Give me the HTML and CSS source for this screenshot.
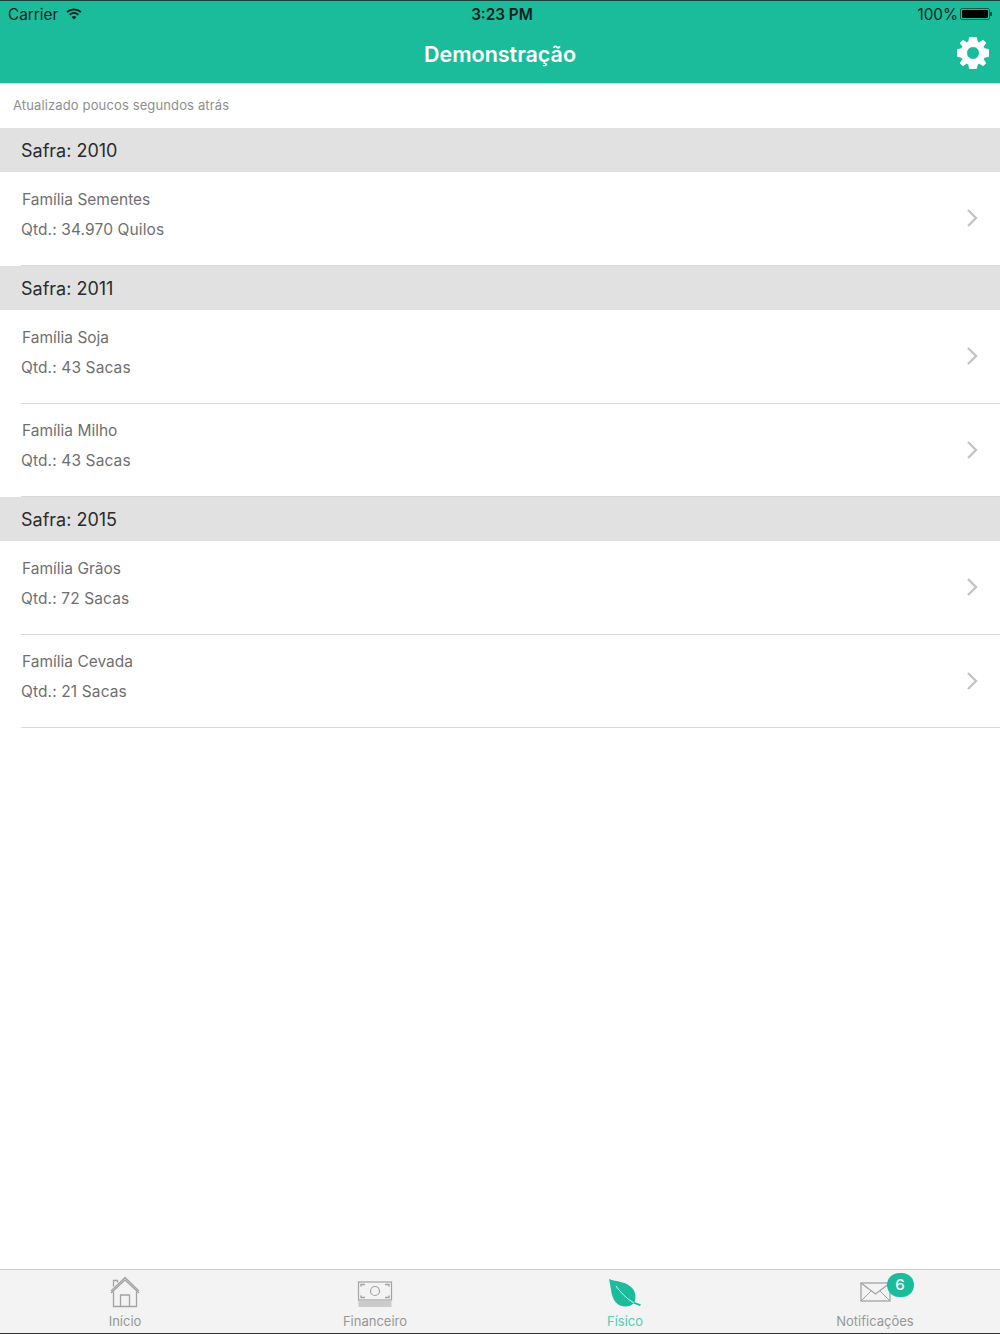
FILE: index.html
```html
<!DOCTYPE html>
<html lang="pt-BR">
<head>
  <meta charset="UTF-8" />
  <title>Demonstração</title>
  <link rel="stylesheet" href="styles.css">
</head>
<body>
  <div class="app">
    <header class="topbar">
      <div class="status">
        <div class="status-left">
          <span>Carrier</span>
          <svg class="wifi" viewBox="0 0 16 12" width="16" height="12">
            <path d="M1 4.2C5 .6 11 .6 15 4.2" fill="none" stroke="#0d1f1c" stroke-width="1.8"/>
            <path d="M3.6 6.8C6.2 4.6 9.8 4.6 12.4 6.8" fill="none" stroke="#0d1f1c" stroke-width="1.8"/>
            <path d="M5.6 8.9L8 11.5L10.4 8.9C9 7.8 7 7.8 5.6 8.9Z" fill="#0d1f1c"/>
          </svg>
        </div>
        <div class="status-time">3:23 PM</div>
        <div class="status-right">
          <span>100%</span>
          <div class="battery"><div class="battery-fill"></div></div>
          <div class="battery-tip"></div>
        </div>
      </div>
      <div class="navbar">
        <h1>Demonstração</h1>
        <svg class="gear" viewBox="0 0 32 32" width="32" height="32">
          <path fill="#fff" fill-rule="evenodd" d="M12.600 0.500L19.400 0.500L20.300 4.800L22.400 5.700L26.100 3.300L28.700 5.900L26.300 9.600L27.200 11.700L31.500 12.600L31.500 19.400L27.200 20.300L26.300 22.400L28.700 26.100L26.100 28.700L22.400 26.300L20.300 27.200L19.400 31.500L12.600 31.500L11.700 27.200L9.600 26.300L5.900 28.700L3.300 26.100L5.700 22.400L4.800 20.300L0.500 19.400L0.500 12.600L4.800 11.700L5.700 9.600L3.300 5.900L5.900 3.300L9.600 5.700L11.700 4.800ZM16 9.500A6.500 6.500 0 1 0 16 22.500A6.500 6.500 0 0 0 16 9.500Z" stroke="#fff" stroke-width="1" stroke-linejoin="round"/>
        </svg>
      </div>
    </header>

    <div class="updated">Atualizado poucos segundos atrás</div>

    <main class="list">
      <div class="section">Safra: 2010</div>
      <div class="row">
        <div class="row-text">
          <p class="family">Família Sementes</p>
          <p class="qty">Qtd.: 34.970 Quilos</p>
        </div>
        <svg class="chevron" viewBox="0 0 12 20" width="12" height="20"><path d="M2 2l8 8-8 8" fill="none" stroke="#c4c4c6" stroke-width="2.4"/></svg>
      </div>

      <div class="section">Safra: 2011</div>
      <div class="row">
        <div class="row-text">
          <p class="family">Família Soja</p>
          <p class="qty">Qtd.: 43 Sacas</p>
        </div>
        <svg class="chevron" viewBox="0 0 12 20" width="12" height="20"><path d="M2 2l8 8-8 8" fill="none" stroke="#c4c4c6" stroke-width="2.4"/></svg>
      </div>
      <div class="row">
        <div class="row-text">
          <p class="family">Família Milho</p>
          <p class="qty">Qtd.: 43 Sacas</p>
        </div>
        <svg class="chevron" viewBox="0 0 12 20" width="12" height="20"><path d="M2 2l8 8-8 8" fill="none" stroke="#c4c4c6" stroke-width="2.4"/></svg>
      </div>

      <div class="section">Safra: 2015</div>
      <div class="row">
        <div class="row-text">
          <p class="family">Família Grãos</p>
          <p class="qty">Qtd.: 72 Sacas</p>
        </div>
        <svg class="chevron" viewBox="0 0 12 20" width="12" height="20"><path d="M2 2l8 8-8 8" fill="none" stroke="#c4c4c6" stroke-width="2.4"/></svg>
      </div>
      <div class="row">
        <div class="row-text">
          <p class="family">Família Cevada</p>
          <p class="qty">Qtd.: 21 Sacas</p>
        </div>
        <svg class="chevron" viewBox="0 0 12 20" width="12" height="20"><path d="M2 2l8 8-8 8" fill="none" stroke="#c4c4c6" stroke-width="2.4"/></svg>
      </div>
    </main>

    <nav class="tabs">
      <a class="tab">
        <svg viewBox="0 0 30 32" width="30" height="32">
          <g fill="none" stroke="#a3a3a3" stroke-width="1.3">
            <path d="M1 15L15 1.500L29 15"/>
            <path d="M3.500 10.500V4.500H7.500V6.500"/>
            <path d="M1 17L15 4L29 17"/>
            <path d="M3.500 15.500V30.500H26.500V15.500"/>
            <path d="M10.500 30.500V19H19.500V30.500"/>
          </g>
        </svg>
        <span>Início</span>
      </a>
      <a class="tab">
        <svg class="money" viewBox="0 0 36 26" width="36" height="26">
          <g fill="none" stroke="#a3a3a3" stroke-width="1.200">
            <rect x="1.500" y="1" width="33" height="18"/>
            <circle cx="18" cy="10" r="4.500"/>
            <path d="M4 5.500V3.500H8M28 3.500H32V5.500M4 14.500V16.500H8M28 16.500H32V14.500" stroke-width="1.400"/>
            <path d="M1.500 21H34.500M1.500 23H34.500M1.500 25H34.500" stroke-width="1"/>
          </g>
        </svg>
        <span>Financeiro</span>
      </a>
      <a class="tab active">
        <svg viewBox="0 0 34 30" width="34" height="30">
          <path fill="#1abc9c" d="M1 1C8 4 19 3 25 11C28 15 28 20 26.500 24L33 26.500L32 28L25.500 25.500C21 30 12 29.500 7.500 24C3 18.500 3 9 1 1Z"/>
          <path d="M8 8C13 15 19 21 26 25" fill="none" stroke="#e4f6f2" stroke-width="1"/>
        </svg>
        <span>Físico</span>
      </a>
      <a class="tab">
        <div class="icon-wrap">
          <svg viewBox="0 0 31 20" width="31" height="20">
            <g fill="none" stroke="#a3a3a3" stroke-width="1.300">
              <rect x="1" y="1" width="29" height="18"/>
              <path d="M1 1L15.500 12L30 1"/>
              <path d="M1 19L11 9M30 19L20 9" stroke-width="1"/>
            </g>
          </svg>
          <div class="badge">6</div>
        </div>
        <span>Notificações</span>
      </a>
    </nav>
  </div>
</body>
</html>
```

FILE: styles.css
```css
:root {
  --primary: #1abc9c;
  --section: #e1e1e1;
  --line: #d9d9d9;
  --text-gray: #6f6f6f;
}

* {
  box-sizing: border-box;
  margin: 0;
  padding: 0;
}

html, body {
  height: 100%;
  background: #fff;
  font-family: 'Inter', 'Liberation Sans', sans-serif;
}

.app {
  height: 1334px;
  display: flex;
  flex-direction: column;
  overflow: hidden;
  border-bottom: 1px solid #333;
}

/* topo */
.topbar {
  height: 84px;
  background: var(--primary);
  border-top: 1px solid #12453b;
  border-bottom: 1px solid #d5d5d5;
  flex-shrink: 0;
}

.status {
  height: 26px;
  padding: 0 8px;
  display: flex;
  align-items: center;
  justify-content: space-between;
  position: relative;
  font-size: 15.3px;
  color: #0d1f1c;
}

.status-left {
  display: flex;
  align-items: center;
  gap: 8px;
}

.status-time {
  position: absolute;
  left: 0;
  right: -4px;
  text-align: center;
  font-weight: 600;
}

.status-right {
  display: flex;
  align-items: center;
}

.battery {
  width: 30px;
  height: 12px;
  margin-left: 2px;
  padding: 1px;
  border: 1px solid #0f5c4c;
  border-radius: 2px;
}

.battery-fill {
  height: 100%;
  background: #000;
  border-radius: 1px;
}

.battery-tip {
  width: 2px;
  height: 4px;
  background: #0f4f42;
}

.navbar {
  height: 56px;
  display: flex;
  align-items: center;
  justify-content: center;
  position: relative;
}

.navbar h1 {
  font-size: 21.500px;
  font-weight: 600;
  color: #fff;
  margin-top: -2px;
}

.gear {
  position: absolute;
  right: 11px;
  top: 10px;
}

.updated {
  height: 44px;
  padding-left: 13px;
  line-height: 43px;
  font-size: 13px;
  letter-spacing: .13px;
  color: #8e8e8e;
  flex-shrink: 0;
}

/* lista */
.list {
  flex: 1;
}

.section {
  height: 44px;
  padding-left: 21px;
  line-height: 46px;
  font-size: 18px;
  color: #2b2b2b;
  background: var(--section);
}

.row {
  height: 93px;
  margin-left: 21px;
  padding-right: 22px;
  display: flex;
  align-items: center;
  justify-content: space-between;
  border-bottom: 1px solid var(--line);
}

.section + .row {
  height: 94px;
}

.row-text {
  color: var(--text-gray);
  font-size: 15.500px;
  margin-top: -9px;
}

.section + .row .row-text {
  margin-top: -7px;
}

.section + .row .chevron {
  margin-top: -1px;
}

.family {
  margin-left: 1px;
  line-height: 30px;
}

.qty {
  line-height: 30px;
  letter-spacing: .12px;
}

/* abas */
.tabs {
  height: 64px;
  flex-shrink: 0;
  display: grid;
  grid-template-columns: repeat(4, 1fr);
  background: #f3f3f3;
  border-top: 1px solid #cfcfcf;
}

.tab {
  position: relative;
  display: flex;
  flex-direction: column;
  align-items: center;
  justify-content: flex-end;
  gap: 5px;
  padding-bottom: 4px;
  font-size: 13px;
  color: #979797;
}

.tab.active {
  color: #4fcfb5;
}

.money {
  margin-bottom: 1px;
}

.icon-wrap {
  position: relative;
  height: 20px;
  margin-bottom: 6px;
}

.badge {
  position: absolute;
  top: -9px;
  left: 27px;
  width: 27px;
  height: 24px;
  border-radius: 12px;
  background: var(--primary);
  color: #fff;
  font-size: 15px;
  font-weight: 500;
  line-height: 24px;
  text-align: center;
}
```
